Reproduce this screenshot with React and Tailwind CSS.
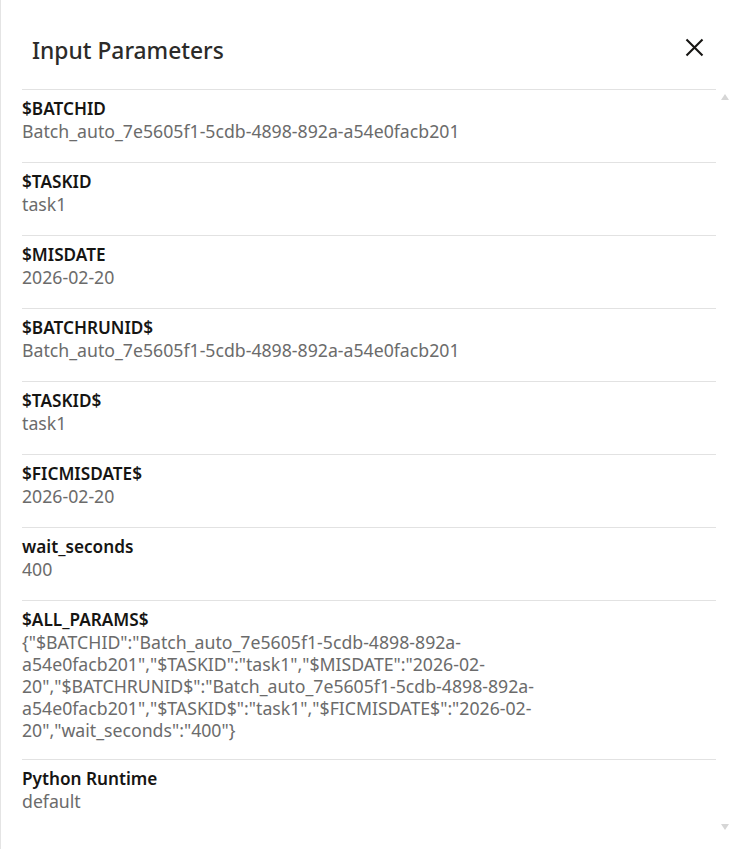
import React from "react";

const params = [
  { name: "$BATCHID", value: "Batch_auto_7e5605f1-5cdb-4898-892a-a54e0facb201" },
  { name: "$TASKID", value: "task1" },
  { name: "$MISDATE", value: "2026-02-20" },
  { name: "$BATCHRUNID$", value: "Batch_auto_7e5605f1-5cdb-4898-892a-a54e0facb201" },
  { name: "$TASKID$", value: "task1" },
  { name: "$FICMISDATE$", value: "2026-02-20" },
  { name: "wait_seconds", value: "400" },
  {
    name: "$ALL_PARAMS$",
    lines: [
      '{"$BATCHID":"Batch_auto_7e5605f1-5cdb-4898-892a-',
      'a54e0facb201","$TASKID":"task1","$MISDATE":"2026-02-',
      '20","$BATCHRUNID$":"Batch_auto_7e5605f1-5cdb-4898-892a-',
      'a54e0facb201","$TASKID$":"task1","$FICMISDATE$":"2026-02-',
      '20","wait_seconds":"400"}',
    ],
  },
  { name: "Python Runtime", value: "default" },
];

const App = () => {
  return (
    <div
      className="h-[849px] w-[748px] overflow-hidden bg-white border-l border-[#e4e4e4] flex flex-col"
      style={{ fontFamily: "'Noto Sans', Roboto, sans-serif" }}
    >
      {/* header */}
      <div className="flex items-center justify-between h-[89px] pl-[31px] pr-[44px] pt-[13px] shrink-0">
        <h1 className="text-[22.8px] font-medium text-[#2c2b29]">
          Input Parameters
        </h1>
        <button className="text-[#161513] -mt-[8px]">
          <svg width="19" height="19" viewBox="0 0 19 19" fill="none">
            <path d="M1.5 1.5L17.5 17.5M17.5 1.5L1.5 17.5" stroke="currentColor" strokeWidth="2.1" />
          </svg>
        </button>
      </div>

      {/* list + scrollbar */}
      <div className="flex flex-1 min-h-0">
        <div className="ml-[21px] w-[694px] flex flex-col">
          {params.map((p) => (
            <div
              key={p.name}
              className={`border-t border-[#e2e2e2] pt-[8px] ${p.lines ? "pb-[18px]" : "pb-[20px]"}`}
            >
              <div className="text-[17.2px] leading-[22px] font-semibold text-[#161513]">
                {p.name}
              </div>
              <div className="text-[17.7px] leading-[22px] text-[#6b6b6b]">
                {p.lines
                  ? p.lines.map((l, i) => <div key={i}>{l}</div>)
                  : p.value}
              </div>
            </div>
          ))}
        </div>
        <div className="w-[15px] ml-[1px] flex flex-col justify-between items-center pt-[5px] pb-[19px]">
          <div className="w-0 h-0 border-l-[4px] border-r-[4px] border-b-[6px] border-l-transparent border-r-transparent border-b-[#d6d6d6]" />
          <div className="w-0 h-0 border-l-[4px] border-r-[4px] border-t-[6px] border-l-transparent border-r-transparent border-t-[#d6d6d6]" />
        </div>
      </div>
    </div>
  );
};

export default App;
